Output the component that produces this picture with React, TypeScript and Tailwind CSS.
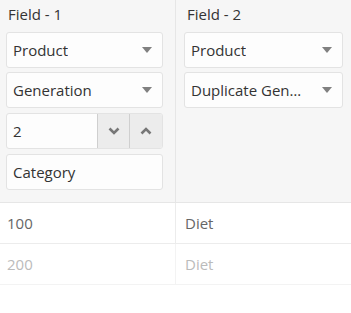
import React from "react";

function Caret() {
  return (
    <svg width="10" height="6" viewBox="0 0 10 6" className="shrink-0">
      <path d="M0 0 H10 L5 6 Z" fill="#808080" />
    </svg>
  );
}

function Select({ label }: { label: string }) {
  return (
    <div className="flex h-[36px] min-w-0 items-center justify-between gap-[16px] rounded-[3px] border border-[#e3e3e3] bg-[#fdfdfd] pl-[6px] pr-[10px]">
      <span className="min-w-0 truncate">{label}</span>
      <Caret />
    </div>
  );
}

function Chevron({ up }: { up?: boolean }) {
  return (
    <svg width="12" height="8" viewBox="0 0 12 8">
      <path
        d={up ? "M1.5 6.5 L6 2 L10.5 6.5" : "M1.5 1.5 L6 6 L10.5 1.5"}
        fill="none"
        stroke="#777"
        strokeWidth="2.6"
      />
    </svg>
  );
}

function NumberBox({ value }: { value: string }) {
  return (
    <div className="flex h-[36px] overflow-hidden rounded-[3px] border border-[#e3e3e3] bg-[#fdfdfd]">
      <span className="flex flex-1 items-center pl-[6px]">{value}</span>
      <button className="flex w-[32px] items-center justify-center border-l border-[#cfcfcf] bg-[#ececec]">
        <Chevron />
      </button>
      <button className="flex w-[33px] items-center justify-center border-l border-[#cfcfcf] bg-[#ececec]">
        <Chevron up />
      </button>
    </div>
  );
}

export default function App() {
  return (
    <div className="h-[313px] w-[351px] overflow-hidden bg-white text-[15px] text-[#333] [font-family:'Open_Sans',sans-serif]">
      <div className="grid h-[203px] grid-cols-[176px_minmax(0,1fr)] border-b border-[#e6e6e6] bg-[#f6f6f6]">
        <div className="flex min-w-0 flex-col gap-[4px] border-r border-[#e6e6e6] pl-[6px] pr-[12px]">
          <div className="flex h-[28px] items-center pl-[2px]">Field - 1</div>
          <Select label="Product" />
          <Select label="Generation" />
          <div className="mt-[1px]">
            <NumberBox value="2" />
          </div>
          <div className="mt-[1px]">
            <div className="flex h-[36px] items-center rounded-[3px] border border-[#e3e3e3] bg-[#fdfdfd] pl-[6px]">
              Category
            </div>
          </div>
        </div>
        <div className="flex min-w-0 flex-col gap-[4px] pl-[8px] pr-[8px]">
          <div className="flex h-[28px] items-center pl-[3px]">Field - 2</div>
          <Select label="Product" />
          <Select label="Duplicate Generation" />
        </div>
      </div>
      <div className="grid h-[41px] grid-cols-[176px_minmax(0,1fr)] border-b border-[#ececec] text-[#666]">
        <div className="flex items-center border-r border-[#ececec] pl-[7px]">100</div>
        <div className="flex items-center pl-[9px]">Diet</div>
      </div>
      <div className="grid h-[41px] grid-cols-[176px_minmax(0,1fr)] border-b border-[#f3f3f3] text-[#bbb]">
        <div className="flex items-center border-r border-[#f3f3f3] pl-[7px]">200</div>
        <div className="flex items-center pl-[9px]">Diet</div>
      </div>
    </div>
  );
}
